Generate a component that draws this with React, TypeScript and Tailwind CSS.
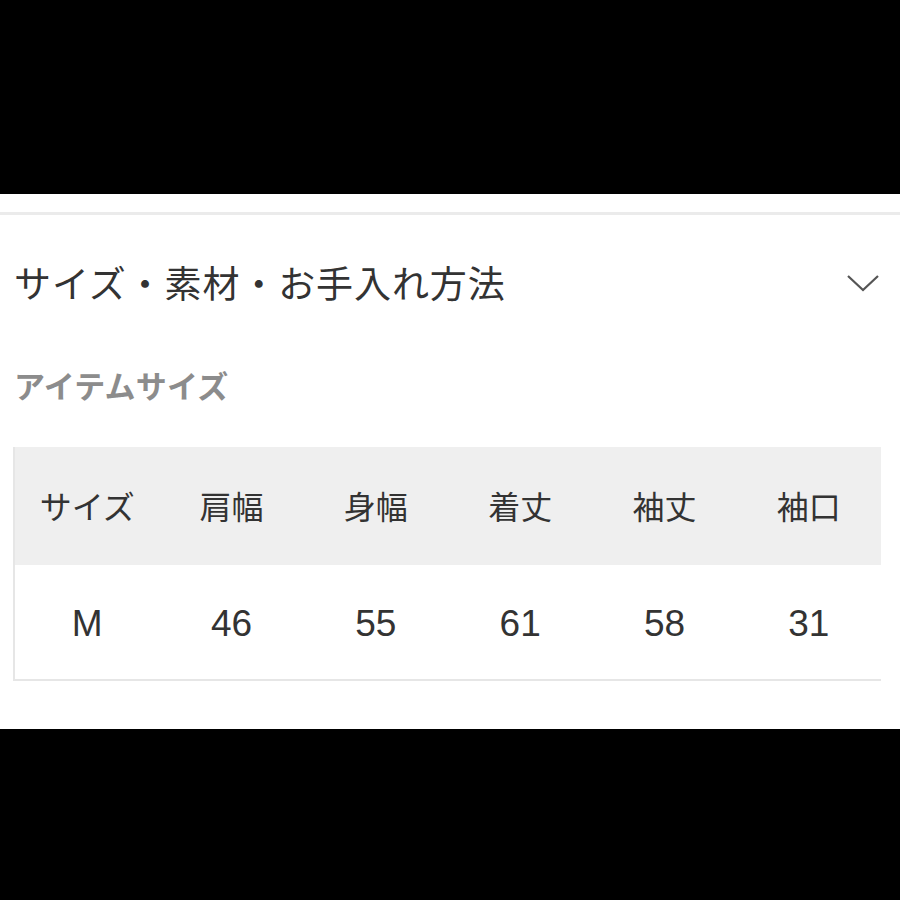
import React from "react";

const headers = ["サイズ", "肩幅", "身幅", "着丈", "袖丈", "袖口"];
const values = ["M", "46", "55", "61", "58", "31"];

const App = () => {
  return (
    <div
      className="w-[900px] h-[900px] bg-black flex flex-col"
      style={{ fontFamily: '"Liberation Sans", "Noto Sans CJK JP", sans-serif' }}
    >
      <div className="h-[194px] shrink-0" />
      <div className="h-[535px] shrink-0 bg-white flex flex-col">
        <div className="h-[18px]" />
        <div className="h-[3px] bg-[#ebebeb]" />
        <div className="flex items-center justify-between pl-[14px] pr-[20px] pt-[47px]">
          <h2 className="text-[37px] leading-[48px] text-[#333] tracking-[0.9px]">
            サイズ・素材・お手入れ方法
          </h2>
          <svg width="34" height="20" viewBox="0 0 34 20" className="mt-[-6px]">
            <path d="M2 3 L17 17 L32 3" fill="none" stroke="#555" strokeWidth="2.2" />
          </svg>
        </div>
        <div className="pl-[14px] pt-[58px] text-[31px] leading-[40px] font-bold text-[#8c8c8c] tracking-[0.2px]">
          アイテムサイズ
        </div>
        <div className="ml-[13px] mr-[19px] mt-[39px] border-l-2 border-b-2 border-[#e6e6e6]">
          <div className="grid grid-cols-6 h-[118px] bg-[#efefef] items-center pt-[4px]">
            {headers.map((h) => (
              <div key={h} className="text-center text-[32px] text-[#333]">
                {h}
              </div>
            ))}
          </div>
          <div className="grid grid-cols-6 h-[114px] items-center pt-[3px]">
            {values.map((v, i) => (
              <div key={i} className="text-center text-[37px] text-[#333]">
                {v}
              </div>
            ))}
          </div>
        </div>
      </div>
    </div>
  );
};

export default App;
